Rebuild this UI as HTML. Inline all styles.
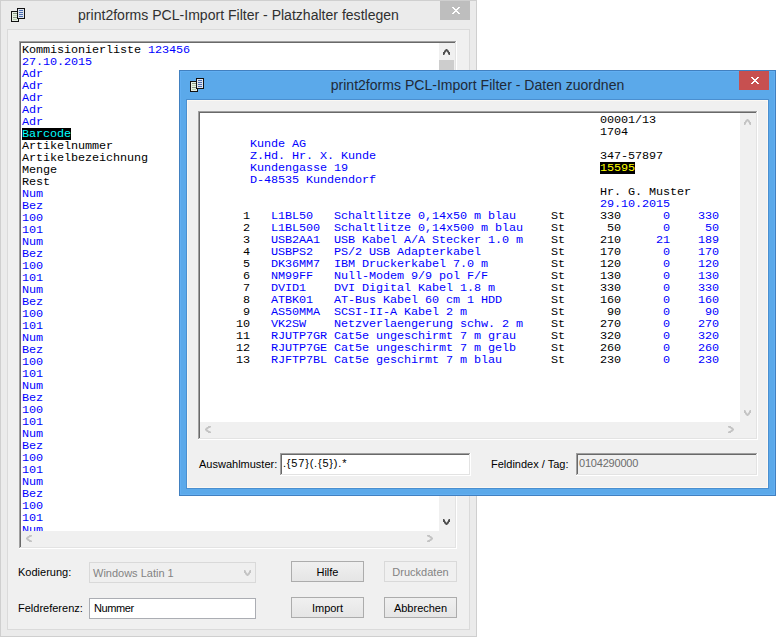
<!DOCTYPE html>
<html><head><meta charset="utf-8"><style>
*{margin:0;padding:0;box-sizing:border-box}
html,body{width:776px;height:637px;overflow:hidden;background:#fff;position:relative}
div,svg,span.a{position:absolute}
.ic{position:absolute;overflow:visible}
.ln{position:absolute;left:0;white-space:pre;height:12px}
.b{color:#0000ff}
.hl{background:#000;color:#00ffff;display:inline-block;height:12px;vertical-align:top}
.hy{background:#000;color:#ffff00;display:inline-block;height:12px;vertical-align:top}
.mono{font-family:"Liberation Mono",monospace;font-size:11.8px;letter-spacing:-0.08px;line-height:12px;color:#000}
.ui{font-family:"Liberation Sans",sans-serif;font-size:11px;color:#000;white-space:pre}
.title{font-family:"Liberation Sans",sans-serif;font-size:14.05px;white-space:pre;text-align:center;line-height:16px}
.sunk{box-shadow:inset -1px -1px #fff,inset 1px 1px #a0a0a0}
.sunk2{box-shadow:inset -1px -1px #e3e3e3,inset 1px 1px #696969}
.btn{border:1px solid #acacac;background:linear-gradient(#f0f0f0,#e5e5e5);text-align:center}
</style></head><body>

<!-- window 1 -->
<div style="left:0;top:0;width:477px;height:637px;background:#ebebeb;border:1px solid #cfcfcf"></div>
<div style="left:7px;top:29px;width:463px;height:601px;background:#f0f0f0;border:1px solid #dadada"></div>
<svg class="ic" style="left:11px;top:8px" width="16" height="16" viewBox="0 0 16 16" shape-rendering="crispEdges">
<rect x="0.5" y="3.5" width="7" height="10" fill="#e6eee4" stroke="#111"/>
<rect x="2" y="5" width="4" height="1" fill="#8a9a84"/><rect x="2" y="7" width="4" height="1" fill="#b8d0b0"/>
<rect x="2" y="9" width="4" height="1" fill="#8a9a84"/><rect x="2" y="11" width="4" height="1" fill="#b8d0b0"/>
<rect x="6.5" y="0.5" width="7" height="10" fill="#dde3ee" stroke="#111"/>
<rect x="8" y="2" width="4" height="1" fill="#4a6db0"/><rect x="8" y="4" width="4" height="1" fill="#4a6db0"/>
<rect x="8" y="6" width="4" height="1" fill="#4a6db0"/><rect x="8" y="8" width="4" height="1" fill="#4a6db0"/>
</svg>
<div class="title" style="left:0;top:7px;width:477px;color:#303030">print2forms PCL-Import Filter - Platzhalter festlegen</div>
<div style="left:440px;top:1px;width:30px;height:19px;background:#bebebe"></div>
<svg class="ic" style="left:452px;top:7px" width="8" height="7" viewBox="0 0 8 7" shape-rendering="crispEdges" fill="#fff"><rect x="0" y="0" width="1" height="1"/><rect x="1" y="0" width="1" height="1"/><rect x="6" y="0" width="1" height="1"/><rect x="7" y="0" width="1" height="1"/><rect x="1" y="1" width="1" height="1"/><rect x="2" y="1" width="1" height="1"/><rect x="5" y="1" width="1" height="1"/><rect x="6" y="1" width="1" height="1"/><rect x="2" y="2" width="1" height="1"/><rect x="3" y="2" width="1" height="1"/><rect x="4" y="2" width="1" height="1"/><rect x="5" y="2" width="1" height="1"/><rect x="3" y="3" width="1" height="1"/><rect x="4" y="3" width="1" height="1"/><rect x="2" y="4" width="1" height="1"/><rect x="3" y="4" width="1" height="1"/><rect x="4" y="4" width="1" height="1"/><rect x="5" y="4" width="1" height="1"/><rect x="1" y="5" width="1" height="1"/><rect x="2" y="5" width="1" height="1"/><rect x="5" y="5" width="1" height="1"/><rect x="6" y="5" width="1" height="1"/><rect x="0" y="6" width="1" height="1"/><rect x="1" y="6" width="1" height="1"/><rect x="6" y="6" width="1" height="1"/><rect x="7" y="6" width="1" height="1"/></svg>

<!-- listbox -->
<div class="sunk" style="left:19px;top:41px;width:438px;height:508px"></div>
<div class="sunk2" style="left:20px;top:42px;width:436px;height:506px"></div>
<div style="left:21px;top:43px;width:418px;height:488px;background:#fff;overflow:hidden">
 <div class="mono" style="left:1px;top:1px;width:417px;height:486px">
<div class="ln" style="top:0px">Kommisionierliste <span class="b">123456</span></div>
<div class="ln" style="top:12px"><span class="b">27.10.2015</span></div>
<div class="ln" style="top:24px"><span class="b">Adr</span></div>
<div class="ln" style="top:36px"><span class="b">Adr</span></div>
<div class="ln" style="top:48px"><span class="b">Adr</span></div>
<div class="ln" style="top:60px"><span class="b">Adr</span></div>
<div class="ln" style="top:72px"><span class="b">Adr</span></div>
<div class="ln" style="top:84px"><span class="hl">Barcode</span></div>
<div class="ln" style="top:96px">Artikelnummer</div>
<div class="ln" style="top:108px">Artikelbezeichnung</div>
<div class="ln" style="top:120px">Menge</div>
<div class="ln" style="top:132px">Rest</div>
<div class="ln" style="top:144px"><span class="b">Num</span></div>
<div class="ln" style="top:156px"><span class="b">Bez</span></div>
<div class="ln" style="top:168px"><span class="b">100</span></div>
<div class="ln" style="top:180px"><span class="b">101</span></div>
<div class="ln" style="top:192px"><span class="b">Num</span></div>
<div class="ln" style="top:204px"><span class="b">Bez</span></div>
<div class="ln" style="top:216px"><span class="b">100</span></div>
<div class="ln" style="top:228px"><span class="b">101</span></div>
<div class="ln" style="top:240px"><span class="b">Num</span></div>
<div class="ln" style="top:252px"><span class="b">Bez</span></div>
<div class="ln" style="top:264px"><span class="b">100</span></div>
<div class="ln" style="top:276px"><span class="b">101</span></div>
<div class="ln" style="top:288px"><span class="b">Num</span></div>
<div class="ln" style="top:300px"><span class="b">Bez</span></div>
<div class="ln" style="top:312px"><span class="b">100</span></div>
<div class="ln" style="top:324px"><span class="b">101</span></div>
<div class="ln" style="top:336px"><span class="b">Num</span></div>
<div class="ln" style="top:348px"><span class="b">Bez</span></div>
<div class="ln" style="top:360px"><span class="b">100</span></div>
<div class="ln" style="top:372px"><span class="b">101</span></div>
<div class="ln" style="top:384px"><span class="b">Num</span></div>
<div class="ln" style="top:396px"><span class="b">Bez</span></div>
<div class="ln" style="top:408px"><span class="b">100</span></div>
<div class="ln" style="top:420px"><span class="b">101</span></div>
<div class="ln" style="top:432px"><span class="b">Num</span></div>
<div class="ln" style="top:444px"><span class="b">Bez</span></div>
<div class="ln" style="top:456px"><span class="b">100</span></div>
<div class="ln" style="top:468px"><span class="b">101</span></div>
<div class="ln" style="top:480px"><span class="b">Num</span></div>
<div class="ln" style="top:492px"><span class="b">Bez</span></div>
<div class="ln" style="top:504px"><span class="b">100</span></div>
<div class="ln" style="top:516px"><span class="b">101</span></div>
 </div>
</div>
<div style="left:439px;top:43px;width:16px;height:488px;background:#f0f0f0"></div>
<div style="left:439px;top:60px;width:15px;height:40px;background:#cdcdcd"></div>
<div style="left:21px;top:531px;width:434px;height:16px;background:#f0f0f0"></div>
<svg class="ic" style="left:443px;top:49px" width="7" height="6" viewBox="0 0 7 6" shape-rendering="crispEdges" fill="#505050"><rect x="2" y="0" width="1" height="1" fill-opacity="0.5"/><rect x="3" y="0" width="1" height="1"/><rect x="4" y="0" width="1" height="1" fill-opacity="0.5"/><rect x="1" y="1" width="1" height="1" fill-opacity="0.5"/><rect x="2" y="1" width="1" height="1"/><rect x="3" y="1" width="1" height="1"/><rect x="4" y="1" width="1" height="1"/><rect x="5" y="1" width="1" height="1" fill-opacity="0.5"/><rect x="1" y="2" width="1" height="1"/><rect x="2" y="2" width="1" height="1"/><rect x="3" y="2" width="1" height="1" fill-opacity="0.5"/><rect x="4" y="2" width="1" height="1"/><rect x="5" y="2" width="1" height="1"/><rect x="0" y="3" width="1" height="1"/><rect x="1" y="3" width="1" height="1"/><rect x="2" y="3" width="1" height="1" fill-opacity="0.5"/><rect x="4" y="3" width="1" height="1" fill-opacity="0.5"/><rect x="5" y="3" width="1" height="1"/><rect x="6" y="3" width="1" height="1"/><rect x="0" y="4" width="1" height="1"/><rect x="1" y="4" width="1" height="1"/><rect x="5" y="4" width="1" height="1"/><rect x="6" y="4" width="1" height="1"/><rect x="0" y="5" width="1" height="1"/><rect x="1" y="5" width="1" height="1" fill-opacity="0.5"/><rect x="5" y="5" width="1" height="1" fill-opacity="0.5"/><rect x="6" y="5" width="1" height="1"/></svg>
<svg class="ic" style="left:443px;top:519px" width="7" height="6" viewBox="0 0 7 6" shape-rendering="crispEdges" fill="#505050"><rect x="0" y="0" width="1" height="1"/><rect x="1" y="0" width="1" height="1" fill-opacity="0.5"/><rect x="5" y="0" width="1" height="1" fill-opacity="0.5"/><rect x="6" y="0" width="1" height="1"/><rect x="0" y="1" width="1" height="1"/><rect x="1" y="1" width="1" height="1"/><rect x="5" y="1" width="1" height="1"/><rect x="6" y="1" width="1" height="1"/><rect x="0" y="2" width="1" height="1"/><rect x="1" y="2" width="1" height="1"/><rect x="2" y="2" width="1" height="1" fill-opacity="0.5"/><rect x="4" y="2" width="1" height="1" fill-opacity="0.5"/><rect x="5" y="2" width="1" height="1"/><rect x="6" y="2" width="1" height="1"/><rect x="1" y="3" width="1" height="1"/><rect x="2" y="3" width="1" height="1"/><rect x="3" y="3" width="1" height="1" fill-opacity="0.5"/><rect x="4" y="3" width="1" height="1"/><rect x="5" y="3" width="1" height="1"/><rect x="1" y="4" width="1" height="1" fill-opacity="0.5"/><rect x="2" y="4" width="1" height="1"/><rect x="3" y="4" width="1" height="1"/><rect x="4" y="4" width="1" height="1"/><rect x="5" y="4" width="1" height="1" fill-opacity="0.5"/><rect x="2" y="5" width="1" height="1" fill-opacity="0.5"/><rect x="3" y="5" width="1" height="1"/><rect x="4" y="5" width="1" height="1" fill-opacity="0.5"/></svg>
<svg class="ic" style="left:26px;top:535px" width="6" height="7" viewBox="0 0 6 7" shape-rendering="crispEdges" fill="#c4c4c4"><rect x="3" y="0" width="1" height="1"/><rect x="4" y="0" width="1" height="1"/><rect x="5" y="0" width="1" height="1"/><rect x="1" y="1" width="1" height="1" fill-opacity="0.5"/><rect x="2" y="1" width="1" height="1"/><rect x="3" y="1" width="1" height="1"/><rect x="4" y="1" width="1" height="1"/><rect x="5" y="1" width="1" height="1" fill-opacity="0.5"/><rect x="0" y="2" width="1" height="1" fill-opacity="0.5"/><rect x="1" y="2" width="1" height="1"/><rect x="2" y="2" width="1" height="1"/><rect x="3" y="2" width="1" height="1" fill-opacity="0.5"/><rect x="0" y="3" width="1" height="1"/><rect x="1" y="3" width="1" height="1"/><rect x="2" y="3" width="1" height="1" fill-opacity="0.5"/><rect x="0" y="4" width="1" height="1" fill-opacity="0.5"/><rect x="1" y="4" width="1" height="1"/><rect x="2" y="4" width="1" height="1"/><rect x="3" y="4" width="1" height="1" fill-opacity="0.5"/><rect x="1" y="5" width="1" height="1" fill-opacity="0.5"/><rect x="2" y="5" width="1" height="1"/><rect x="3" y="5" width="1" height="1"/><rect x="4" y="5" width="1" height="1"/><rect x="5" y="5" width="1" height="1" fill-opacity="0.5"/><rect x="3" y="6" width="1" height="1"/><rect x="4" y="6" width="1" height="1"/><rect x="5" y="6" width="1" height="1"/></svg>
<svg class="ic" style="left:427px;top:535px" width="6" height="7" viewBox="0 0 6 7" shape-rendering="crispEdges" fill="#c4c4c4"><rect x="0" y="0" width="1" height="1"/><rect x="1" y="0" width="1" height="1"/><rect x="2" y="0" width="1" height="1"/><rect x="0" y="1" width="1" height="1" fill-opacity="0.5"/><rect x="1" y="1" width="1" height="1"/><rect x="2" y="1" width="1" height="1"/><rect x="3" y="1" width="1" height="1"/><rect x="4" y="1" width="1" height="1" fill-opacity="0.5"/><rect x="2" y="2" width="1" height="1" fill-opacity="0.5"/><rect x="3" y="2" width="1" height="1"/><rect x="4" y="2" width="1" height="1"/><rect x="5" y="2" width="1" height="1" fill-opacity="0.5"/><rect x="3" y="3" width="1" height="1" fill-opacity="0.5"/><rect x="4" y="3" width="1" height="1"/><rect x="5" y="3" width="1" height="1"/><rect x="2" y="4" width="1" height="1" fill-opacity="0.5"/><rect x="3" y="4" width="1" height="1"/><rect x="4" y="4" width="1" height="1"/><rect x="5" y="4" width="1" height="1" fill-opacity="0.5"/><rect x="0" y="5" width="1" height="1" fill-opacity="0.5"/><rect x="1" y="5" width="1" height="1"/><rect x="2" y="5" width="1" height="1"/><rect x="3" y="5" width="1" height="1"/><rect x="4" y="5" width="1" height="1" fill-opacity="0.5"/><rect x="0" y="6" width="1" height="1"/><rect x="1" y="6" width="1" height="1"/><rect x="2" y="6" width="1" height="1"/></svg>

<div class="ui" style="left:18px;top:566px">Kodierung:</div>
<div style="left:89px;top:562px;width:167px;height:21px;border:1px solid #d9d9d9;background:#efefef"></div>
<div class="ui" style="left:93px;top:567px;color:#838383">Windows Latin 1</div>
<svg class="ic" style="left:244px;top:570px" width="7" height="6" viewBox="0 0 7 6" shape-rendering="crispEdges" fill="#c4c4c4"><rect x="0" y="0" width="1" height="1"/><rect x="1" y="0" width="1" height="1" fill-opacity="0.5"/><rect x="5" y="0" width="1" height="1" fill-opacity="0.5"/><rect x="6" y="0" width="1" height="1"/><rect x="0" y="1" width="1" height="1"/><rect x="1" y="1" width="1" height="1"/><rect x="5" y="1" width="1" height="1"/><rect x="6" y="1" width="1" height="1"/><rect x="0" y="2" width="1" height="1"/><rect x="1" y="2" width="1" height="1"/><rect x="2" y="2" width="1" height="1" fill-opacity="0.5"/><rect x="4" y="2" width="1" height="1" fill-opacity="0.5"/><rect x="5" y="2" width="1" height="1"/><rect x="6" y="2" width="1" height="1"/><rect x="1" y="3" width="1" height="1"/><rect x="2" y="3" width="1" height="1"/><rect x="3" y="3" width="1" height="1" fill-opacity="0.5"/><rect x="4" y="3" width="1" height="1"/><rect x="5" y="3" width="1" height="1"/><rect x="1" y="4" width="1" height="1" fill-opacity="0.5"/><rect x="2" y="4" width="1" height="1"/><rect x="3" y="4" width="1" height="1"/><rect x="4" y="4" width="1" height="1"/><rect x="5" y="4" width="1" height="1" fill-opacity="0.5"/><rect x="2" y="5" width="1" height="1" fill-opacity="0.5"/><rect x="3" y="5" width="1" height="1"/><rect x="4" y="5" width="1" height="1" fill-opacity="0.5"/></svg>
<div class="ui" style="left:18px;top:602px">Feldreferenz:</div>
<div style="left:89px;top:598px;width:167px;height:21px;border:1px solid #abadb3;background:#fff"></div>
<div class="ui" style="left:94px;top:602px;letter-spacing:-0.4px">Nummer</div>

<div class="btn ui" style="left:291px;top:561px;width:73px;height:21px;line-height:19px;padding-top:1px">Hilfe</div>
<div class="ui" style="left:384px;top:561px;width:73px;height:21px;line-height:19px;padding-top:1px;border:1px solid #d9d9d9;background:#f0f0f0;color:#838383;text-align:center">Druckdaten</div>
<div class="btn ui" style="left:291px;top:597px;width:73px;height:21px;line-height:19px;padding-top:1px">Import</div>
<div class="btn ui" style="left:384px;top:597px;width:73px;height:21px;line-height:19px;padding-top:1px">Abbrechen</div>

<!-- window 2 -->
<div style="left:179px;top:70px;width:597px;height:426px;background:#5ba9ea;border:1px solid #4180c0;box-shadow:inset 0 0 0 1px #62aff2"></div>
<div style="left:186px;top:99px;width:583px;height:390px;border:1px solid #4a8fd0"></div>
<div style="left:187px;top:100px;width:581px;height:388px;background:#f0f0f0;border:1px solid #fbf8f3"></div>
<svg class="ic" style="left:190px;top:78px" width="16" height="16" viewBox="0 0 16 16" shape-rendering="crispEdges">
<rect x="0.5" y="3.5" width="7" height="10" fill="#e6eee4" stroke="#111"/>
<rect x="2" y="5" width="4" height="1" fill="#8a9a84"/><rect x="2" y="7" width="4" height="1" fill="#b8d0b0"/>
<rect x="2" y="9" width="4" height="1" fill="#8a9a84"/><rect x="2" y="11" width="4" height="1" fill="#b8d0b0"/>
<rect x="6.5" y="0.5" width="7" height="10" fill="#dde3ee" stroke="#111"/>
<rect x="8" y="2" width="4" height="1" fill="#4a6db0"/><rect x="8" y="4" width="4" height="1" fill="#4a6db0"/>
<rect x="8" y="6" width="4" height="1" fill="#4a6db0"/><rect x="8" y="8" width="4" height="1" fill="#4a6db0"/>
</svg>
<div class="title" style="left:179px;top:77px;width:597px;color:#202a38">print2forms PCL-Import Filter - Daten zuordnen</div>
<div style="left:739px;top:71px;width:30px;height:19px;background:#c75050"></div>
<svg class="ic" style="left:751px;top:77px" width="8" height="7" viewBox="0 0 8 7" shape-rendering="crispEdges" fill="#fff"><rect x="0" y="0" width="1" height="1"/><rect x="1" y="0" width="1" height="1"/><rect x="6" y="0" width="1" height="1"/><rect x="7" y="0" width="1" height="1"/><rect x="1" y="1" width="1" height="1"/><rect x="2" y="1" width="1" height="1"/><rect x="5" y="1" width="1" height="1"/><rect x="6" y="1" width="1" height="1"/><rect x="2" y="2" width="1" height="1"/><rect x="3" y="2" width="1" height="1"/><rect x="4" y="2" width="1" height="1"/><rect x="5" y="2" width="1" height="1"/><rect x="3" y="3" width="1" height="1"/><rect x="4" y="3" width="1" height="1"/><rect x="2" y="4" width="1" height="1"/><rect x="3" y="4" width="1" height="1"/><rect x="4" y="4" width="1" height="1"/><rect x="5" y="4" width="1" height="1"/><rect x="1" y="5" width="1" height="1"/><rect x="2" y="5" width="1" height="1"/><rect x="5" y="5" width="1" height="1"/><rect x="6" y="5" width="1" height="1"/><rect x="0" y="6" width="1" height="1"/><rect x="1" y="6" width="1" height="1"/><rect x="6" y="6" width="1" height="1"/><rect x="7" y="6" width="1" height="1"/></svg>

<div class="sunk" style="left:198px;top:111px;width:560px;height:329px"></div>
<div class="sunk2" style="left:199px;top:112px;width:558px;height:327px"></div>
<div style="left:200px;top:113px;width:540px;height:309px;background:#fff;overflow:hidden">
 <div class="mono" style="left:1px;top:1px;width:539px;height:308px">
<div class="ln" style="top:0px">                                                         00001/13</div>
<div class="ln" style="top:12px">                                                         1704</div>
<div class="ln" style="top:24px">       <span class="b">Kunde AG</span></div>
<div class="ln" style="top:36px">       <span class="b">Z.Hd. Hr. X. Kunde</span>                                347-57897</div>
<div class="ln" style="top:48px">       <span class="b">Kundengasse 19</span>                                    <span class="hy">15595</span></div>
<div class="ln" style="top:60px">       <span class="b">D-48535 Kundendorf</span></div>
<div class="ln" style="top:72px">                                                         Hr. G. Muster</div>
<div class="ln" style="top:84px">                                                         <span class="b">29.10.2015</span></div>
<div class="ln" style="top:96px">      1   <span class="b">L1BL50</span>   <span class="b">Schaltlitze 0,14x50 m blau</span>     St     330      <span class="b">0</span>    <span class="b">330</span></div>
<div class="ln" style="top:108px">      2   <span class="b">L1BL500</span>  <span class="b">Schaltlitze 0,14x500 m blau</span>    St      50      <span class="b">0</span>     <span class="b">50</span></div>
<div class="ln" style="top:120px">      3   <span class="b">USB2AA1</span>  <span class="b">USB Kabel A/A Stecker 1.0 m</span>    St     210     <span class="b">21</span>    <span class="b">189</span></div>
<div class="ln" style="top:132px">      4   <span class="b">USBPS2</span>   <span class="b">PS/2 USB Adapterkabel</span>          St     170      <span class="b">0</span>    <span class="b">170</span></div>
<div class="ln" style="top:144px">      5   <span class="b">DK36MM7</span>  <span class="b">IBM Druckerkabel 7.0 m</span>         St     120      <span class="b">0</span>    <span class="b">120</span></div>
<div class="ln" style="top:156px">      6   <span class="b">NM99FF</span>   <span class="b">Null-Modem 9/9 pol F/F</span>         St     130      <span class="b">0</span>    <span class="b">130</span></div>
<div class="ln" style="top:168px">      7   <span class="b">DVID1</span>    <span class="b">DVI Digital Kabel 1.8 m</span>        St     330      <span class="b">0</span>    <span class="b">330</span></div>
<div class="ln" style="top:180px">      8   <span class="b">ATBK01</span>   <span class="b">AT-Bus Kabel 60 cm 1 HDD</span>       St     160      <span class="b">0</span>    <span class="b">160</span></div>
<div class="ln" style="top:192px">      9   <span class="b">AS50MMA</span>  <span class="b">SCSI-II-A Kabel 2 m</span>            St      90      <span class="b">0</span>     <span class="b">90</span></div>
<div class="ln" style="top:204px">     10   <span class="b">VK2SW</span>    <span class="b">Netzverlaengerung schw. 2 m</span>    St     270      <span class="b">0</span>    <span class="b">270</span></div>
<div class="ln" style="top:216px">     11   <span class="b">RJUTP7GR</span> <span class="b">Cat5e ungeschirmt 7 m grau</span>     St     320      <span class="b">0</span>    <span class="b">320</span></div>
<div class="ln" style="top:228px">     12   <span class="b">RJUTP7GE</span> <span class="b">Cat5e ungeschirmt 7 m gelb</span>     St     260      <span class="b">0</span>    <span class="b">260</span></div>
<div class="ln" style="top:240px">     13   <span class="b">RJFTP7BL</span> <span class="b">Cat5e geschirmt 7 m blau</span>       St     230      <span class="b">0</span>    <span class="b">230</span></div>
 </div>
</div>
<div style="left:740px;top:113px;width:16px;height:309px;background:#f0f0f0"></div>
<div style="left:200px;top:422px;width:556px;height:16px;background:#f0f0f0"></div>
<svg class="ic" style="left:744px;top:119px" width="7" height="6" viewBox="0 0 7 6" shape-rendering="crispEdges" fill="#c4c4c4"><rect x="2" y="0" width="1" height="1" fill-opacity="0.5"/><rect x="3" y="0" width="1" height="1"/><rect x="4" y="0" width="1" height="1" fill-opacity="0.5"/><rect x="1" y="1" width="1" height="1" fill-opacity="0.5"/><rect x="2" y="1" width="1" height="1"/><rect x="3" y="1" width="1" height="1"/><rect x="4" y="1" width="1" height="1"/><rect x="5" y="1" width="1" height="1" fill-opacity="0.5"/><rect x="1" y="2" width="1" height="1"/><rect x="2" y="2" width="1" height="1"/><rect x="3" y="2" width="1" height="1" fill-opacity="0.5"/><rect x="4" y="2" width="1" height="1"/><rect x="5" y="2" width="1" height="1"/><rect x="0" y="3" width="1" height="1"/><rect x="1" y="3" width="1" height="1"/><rect x="2" y="3" width="1" height="1" fill-opacity="0.5"/><rect x="4" y="3" width="1" height="1" fill-opacity="0.5"/><rect x="5" y="3" width="1" height="1"/><rect x="6" y="3" width="1" height="1"/><rect x="0" y="4" width="1" height="1"/><rect x="1" y="4" width="1" height="1"/><rect x="5" y="4" width="1" height="1"/><rect x="6" y="4" width="1" height="1"/><rect x="0" y="5" width="1" height="1"/><rect x="1" y="5" width="1" height="1" fill-opacity="0.5"/><rect x="5" y="5" width="1" height="1" fill-opacity="0.5"/><rect x="6" y="5" width="1" height="1"/></svg>
<svg class="ic" style="left:744px;top:410px" width="7" height="6" viewBox="0 0 7 6" shape-rendering="crispEdges" fill="#c4c4c4"><rect x="0" y="0" width="1" height="1"/><rect x="1" y="0" width="1" height="1" fill-opacity="0.5"/><rect x="5" y="0" width="1" height="1" fill-opacity="0.5"/><rect x="6" y="0" width="1" height="1"/><rect x="0" y="1" width="1" height="1"/><rect x="1" y="1" width="1" height="1"/><rect x="5" y="1" width="1" height="1"/><rect x="6" y="1" width="1" height="1"/><rect x="0" y="2" width="1" height="1"/><rect x="1" y="2" width="1" height="1"/><rect x="2" y="2" width="1" height="1" fill-opacity="0.5"/><rect x="4" y="2" width="1" height="1" fill-opacity="0.5"/><rect x="5" y="2" width="1" height="1"/><rect x="6" y="2" width="1" height="1"/><rect x="1" y="3" width="1" height="1"/><rect x="2" y="3" width="1" height="1"/><rect x="3" y="3" width="1" height="1" fill-opacity="0.5"/><rect x="4" y="3" width="1" height="1"/><rect x="5" y="3" width="1" height="1"/><rect x="1" y="4" width="1" height="1" fill-opacity="0.5"/><rect x="2" y="4" width="1" height="1"/><rect x="3" y="4" width="1" height="1"/><rect x="4" y="4" width="1" height="1"/><rect x="5" y="4" width="1" height="1" fill-opacity="0.5"/><rect x="2" y="5" width="1" height="1" fill-opacity="0.5"/><rect x="3" y="5" width="1" height="1"/><rect x="4" y="5" width="1" height="1" fill-opacity="0.5"/></svg>
<svg class="ic" style="left:205px;top:426px" width="6" height="7" viewBox="0 0 6 7" shape-rendering="crispEdges" fill="#c4c4c4"><rect x="3" y="0" width="1" height="1"/><rect x="4" y="0" width="1" height="1"/><rect x="5" y="0" width="1" height="1"/><rect x="1" y="1" width="1" height="1" fill-opacity="0.5"/><rect x="2" y="1" width="1" height="1"/><rect x="3" y="1" width="1" height="1"/><rect x="4" y="1" width="1" height="1"/><rect x="5" y="1" width="1" height="1" fill-opacity="0.5"/><rect x="0" y="2" width="1" height="1" fill-opacity="0.5"/><rect x="1" y="2" width="1" height="1"/><rect x="2" y="2" width="1" height="1"/><rect x="3" y="2" width="1" height="1" fill-opacity="0.5"/><rect x="0" y="3" width="1" height="1"/><rect x="1" y="3" width="1" height="1"/><rect x="2" y="3" width="1" height="1" fill-opacity="0.5"/><rect x="0" y="4" width="1" height="1" fill-opacity="0.5"/><rect x="1" y="4" width="1" height="1"/><rect x="2" y="4" width="1" height="1"/><rect x="3" y="4" width="1" height="1" fill-opacity="0.5"/><rect x="1" y="5" width="1" height="1" fill-opacity="0.5"/><rect x="2" y="5" width="1" height="1"/><rect x="3" y="5" width="1" height="1"/><rect x="4" y="5" width="1" height="1"/><rect x="5" y="5" width="1" height="1" fill-opacity="0.5"/><rect x="3" y="6" width="1" height="1"/><rect x="4" y="6" width="1" height="1"/><rect x="5" y="6" width="1" height="1"/></svg>
<svg class="ic" style="left:728px;top:426px" width="6" height="7" viewBox="0 0 6 7" shape-rendering="crispEdges" fill="#c4c4c4"><rect x="0" y="0" width="1" height="1"/><rect x="1" y="0" width="1" height="1"/><rect x="2" y="0" width="1" height="1"/><rect x="0" y="1" width="1" height="1" fill-opacity="0.5"/><rect x="1" y="1" width="1" height="1"/><rect x="2" y="1" width="1" height="1"/><rect x="3" y="1" width="1" height="1"/><rect x="4" y="1" width="1" height="1" fill-opacity="0.5"/><rect x="2" y="2" width="1" height="1" fill-opacity="0.5"/><rect x="3" y="2" width="1" height="1"/><rect x="4" y="2" width="1" height="1"/><rect x="5" y="2" width="1" height="1" fill-opacity="0.5"/><rect x="3" y="3" width="1" height="1" fill-opacity="0.5"/><rect x="4" y="3" width="1" height="1"/><rect x="5" y="3" width="1" height="1"/><rect x="2" y="4" width="1" height="1" fill-opacity="0.5"/><rect x="3" y="4" width="1" height="1"/><rect x="4" y="4" width="1" height="1"/><rect x="5" y="4" width="1" height="1" fill-opacity="0.5"/><rect x="0" y="5" width="1" height="1" fill-opacity="0.5"/><rect x="1" y="5" width="1" height="1"/><rect x="2" y="5" width="1" height="1"/><rect x="3" y="5" width="1" height="1"/><rect x="4" y="5" width="1" height="1" fill-opacity="0.5"/><rect x="0" y="6" width="1" height="1"/><rect x="1" y="6" width="1" height="1"/><rect x="2" y="6" width="1" height="1"/></svg>

<div class="ui" style="left:199px;top:458px">Auswahlmuster:</div>
<div class="sunk" style="left:280px;top:453px;width:191px;height:23px"></div>
<div class="sunk2" style="left:281px;top:454px;width:189px;height:21px;background:#fff"></div>
<div class="ui" style="left:283px;top:457px;letter-spacing:0.8px">.{57}(.{5}).*</div>
<div class="ui" style="left:491px;top:458px">Feldindex / Tag:</div>
<div class="sunk" style="left:576px;top:453px;width:182px;height:23px"></div>
<div class="sunk2" style="left:577px;top:454px;width:180px;height:21px;background:#f0f0f0"></div>
<div class="ui" style="left:579px;top:457px;color:#6d6d6d;letter-spacing:-0.2px">0104290000</div>

</body></html>
